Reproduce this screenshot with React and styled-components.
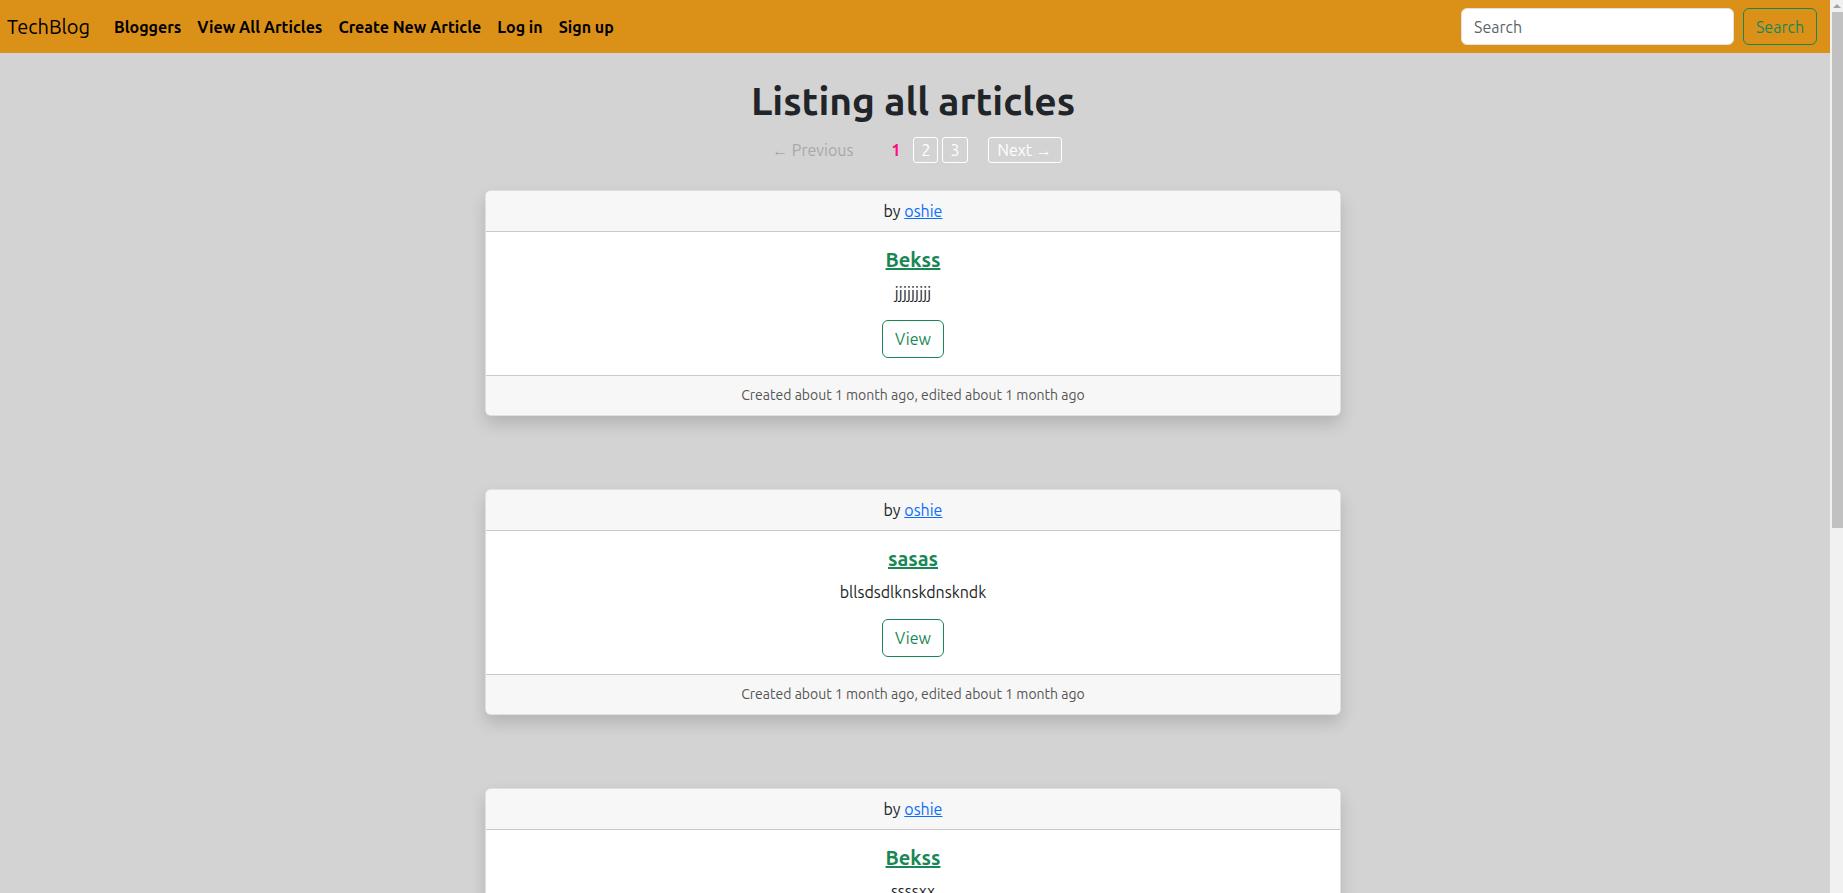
import React from 'react'
import styled, {createGlobalStyle} from 'styled-components'

const Orange = '#db9118'
const Green = '#198754'

const GlobalStyle = createGlobalStyle`
html, body {
  margin: 0;
  padding: 0;
  background: #d3d3d3;
  font-family: Ubuntu, "Noto Sans", "Open Sans", sans-serif;
  font-size: 16px;
  color: #212529;
  line-height: 1.5;
}
* { box-sizing: border-box; }
`

const Page = styled.div`
display: grid;
grid-template-columns: 1fr 13px;
align-items: start;
`
const Content = styled.div`
min-width: 0;
`
// drawn scroll bar, the reference shows the browser one
const ScrollTrack = styled.div`
position: sticky;
top: 0;
height: 100vh;
background: #f1f1f1;
display: flex;
flex-direction: column;
align-items: flex-end;
`
const ScrollArrow = styled.div`
height: 12px;
width: 13px;
display: flex;
justify-content: center;
align-items: center;
&::before {
  content: '';
  border-left: 4px solid transparent;
  border-right: 4px solid transparent;
  border-bottom: 4px solid #a3a3a3;
}
`
const ScrollThumb = styled.div`
width: 11px;
height: 516px;
background: #c1c1c1;
`

const Nav = styled.nav`
height: 53px;
background: ${Orange};
display: flex;
align-items: center;
padding: 0 13px 0 7px;
`
const Brand = styled.a`
font-size: 20px;
color: #000;
text-decoration: none;
margin-right: 24px;
`
const NavLinks = styled.div`
display: flex;
gap: 16px;
flex: 1;
`
const NavLink = styled.a`
font-weight: 700;
color: #000;
text-decoration: none;
`
const SearchForm = styled.form`
display: flex;
gap: 9px;
`
const SearchInput = styled.input`
width: 273px;
height: 37px;
border: 1px solid #dee2e6;
border-radius: 6px;
padding: 6px 12px;
font: inherit;
&::placeholder { color: #5c636a; }
`
const SearchButton = styled.button`
height: 37px;
width: 74px;
background: transparent;
border: 1px solid ${Green};
color: ${Green};
border-radius: 6px;
font: inherit;
`

const Main = styled.main`
display: flex;
flex-direction: column;
align-items: center;
padding: 24px 4px 60px 0;
`
const Title = styled.h1`
font-size: 39px;
font-weight: 700;
line-height: 1.23;
margin: 0 0 12px;
`
const Pagination = styled.div`
display: flex;
align-items: center;
font-size: 16px;
margin-bottom: 27px;
margin-left: 4px;
`
const PageItem = styled.span`
padding: 0 4px;
height: 26px;
display: flex;
align-items: center;
color: ${props => props.disabled ? '#a8a8a8' : '#fff'};
${props => props.boxed && `
  border: 1px solid #fff;
  border-radius: 3px;
  padding: 0 ${props.wide ? '9px' : '7px'};
`}
${props => props.current && `
  color: #ff0a7f;
  font-weight: 700;
`}
margin: ${props => props.margin || '0 2px'};
`

const Card = styled.div`
width: 856px;
background: #fff;
border-radius: 6px;
border: 1px solid rgba(0,0,0,.12);
box-shadow: 0 8px 16px rgba(0,0,0,.15);
text-align: center;
margin-bottom: 73px;
overflow: hidden;
`
const CardHeader = styled.div`
background: #f7f7f7;
border-bottom: 1px solid #cacaca;
padding: 8px 16px;
`
const Author = styled.a`
color: #0d6efd;
`
const CardBody = styled.div`
padding: 13px 16px 17px;
`
const CardTitle = styled.a`
display: inline-block;
color: ${Green};
font-size: 20px;
font-weight: 700;
margin-bottom: 6px;
`
const CardText = styled.p`
margin: 0 0 15px;
`
const ViewButton = styled.button`
height: 38px;
padding: 0 12px;
background: #fff;
border: 1px solid ${Green};
color: ${Green};
border-radius: 6px;
font: inherit;
`
const CardFooter = styled.div`
background: #f7f7f7;
border-top: 1px solid #cacaca;
padding: 9px 16px;
font-size: 14px;
color: #555;
`

const articles = [
  {title: 'Bekss', body: 'jjjjjjjjj'},
  {title: 'sasas', body: 'bllsdsdlknskdnskndk'},
  {title: 'Bekss', body: 'ssssxx'},
]

export default function App() {
  return (
    <Page>
      <GlobalStyle />
      <Content>
        <Nav>
          <Brand href="#">TechBlog</Brand>
          <NavLinks>
            <NavLink href="#">Bloggers</NavLink>
            <NavLink href="#">View All Articles</NavLink>
            <NavLink href="#">Create New Article</NavLink>
            <NavLink href="#">Log in</NavLink>
            <NavLink href="#">Sign up</NavLink>
          </NavLinks>
          <SearchForm onSubmit={e => e.preventDefault()}>
            <SearchInput placeholder="Search" />
            <SearchButton>Search</SearchButton>
          </SearchForm>
        </Nav>
        <Main>
          <Title>Listing all articles</Title>
          <Pagination>
            <PageItem disabled margin="0 30px 0 0">← Previous</PageItem>
            <PageItem current margin="0 7px 0 0">1</PageItem>
            <PageItem boxed>2</PageItem>
            <PageItem boxed>3</PageItem>
            <PageItem boxed wide margin="0 0 0 18px">Next →</PageItem>
          </Pagination>
          {articles.map((a, i) => (
            <Card key={i}>
              <CardHeader>by <Author href="#">oshie</Author></CardHeader>
              <CardBody>
                <CardTitle href="#">{a.title}</CardTitle>
                <CardText>{a.body}</CardText>
                <ViewButton>View</ViewButton>
              </CardBody>
              <CardFooter>Created about 1 month ago, edited about 1 month ago</CardFooter>
            </Card>
          ))}
        </Main>
      </Content>
      <ScrollTrack>
        <ScrollArrow />
        <ScrollThumb />
      </ScrollTrack>
    </Page>
  )
}
